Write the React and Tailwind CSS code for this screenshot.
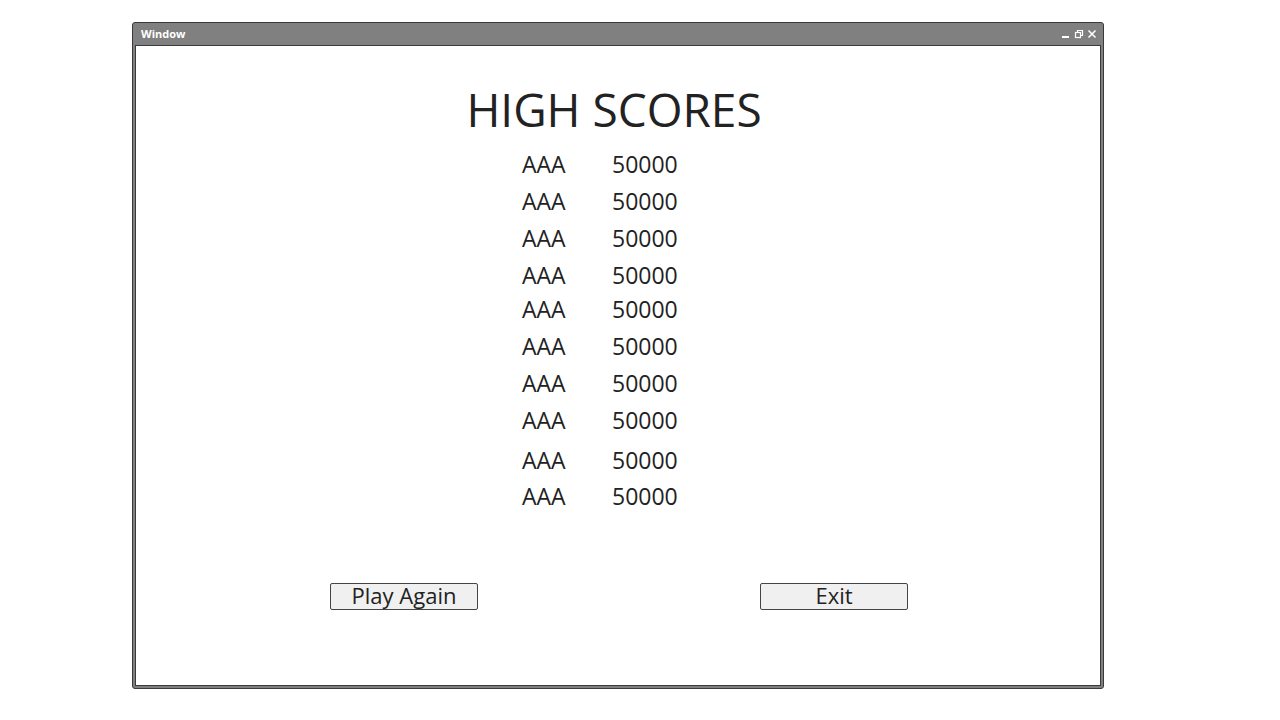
import React from "react";

// spacing between rows isn't uniform in the mockup
const rows = [
  "mt-0",
  "mt-0",
  "mt-0",
  "mt-0",
  "-mt-[3px]",
  "mt-0",
  "mt-0",
  "mt-0",
  "mt-[3px]",
  "-mt-[1px]",
];

const font = { fontFamily: '"Open Sans", "Noto Sans", sans-serif' };

export default function App() {
  return (
    <div className="w-[1280px] h-[720px] bg-white pt-[22px] pl-[132px]" style={font}>
      <div className="w-[972px] h-[667px] flex flex-col rounded-[3px] border border-[#3a3a3a] bg-[#808080]">
        <div className="h-[22px] flex items-center justify-between pl-[8px] pr-[6px]">
          <span className="text-[11px] font-bold text-white leading-none -mt-[1px]">Window</span>
          <div className="flex items-center gap-[3px] text-white">
            <svg width="10" height="10" viewBox="0 0 10 10">
              <rect x="1" y="7" width="7" height="2" fill="white" />
            </svg>
            <svg width="10" height="10" viewBox="0 0 10 10" fill="none" stroke="white" strokeWidth="1.2">
              <rect x="1.5" y="3.5" width="5" height="5" />
              <path d="M3.5 3.5V1.5H8.5V6.5H6.5" />
            </svg>
            <svg width="10" height="10" viewBox="0 0 10 10" fill="none" stroke="white" strokeWidth="1.5">
              <path d="M1.5 1.5L8.5 8.5M8.5 1.5L1.5 8.5" />
            </svg>
          </div>
        </div>
        <div className="flex-1 mx-[2px] mb-[2px] bg-white border border-[#3a3a3a] flex flex-col">
          <h1 className="mt-[37px] ml-[-8px] text-center text-[46px] leading-[52px] text-[#222]">
            HIGH SCORES
          </h1>
          <div className="mt-[11px] ml-[386px] flex flex-col text-[23px] text-[#222]">
            {rows.map((m, i) => (
              <div key={i} className={`${m} h-[37px] flex items-center`}>
                <span className="w-[90px]">AAA</span>
                <span>50000</span>
              </div>
            ))}
          </div>
          <div className="mt-[68px] flex">
            <button className="ml-[194px] w-[148px] h-[27px] pb-[3px] flex items-center justify-center rounded-[2px] border border-[#444] bg-[#f0f0f0] text-[22px] leading-none text-[#222]">
              Play Again
            </button>
            <button className="ml-[282px] w-[148px] h-[27px] pb-[3px] flex items-center justify-center rounded-[2px] border border-[#444] bg-[#f0f0f0] text-[22px] leading-none text-[#222]">
              Exit
            </button>
          </div>
        </div>
      </div>
    </div>
  );
}
